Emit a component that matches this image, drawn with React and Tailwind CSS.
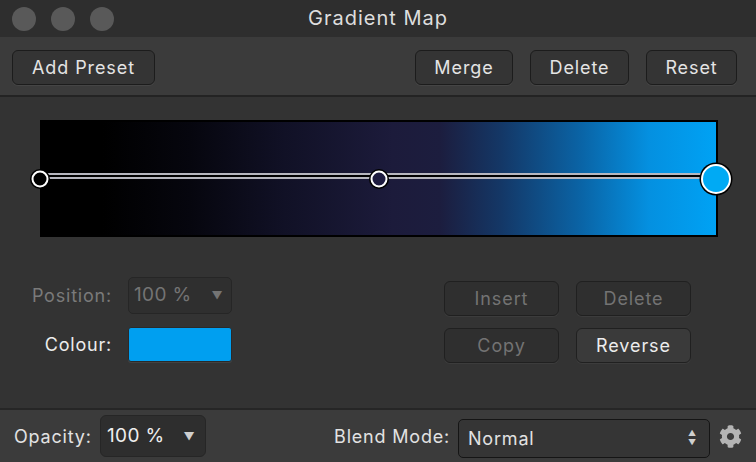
import { FaCog } from 'react-icons/fa';

const FONT = { fontFamily: 'Inter, "Liberation Sans", sans-serif' };

const ToolButton = ({ children, className = '' }) => (
  <button
    className={`h-[35px] rounded-[6px] border border-[#1c1c1c] bg-[#343434] text-[18px] tracking-[0.05em] text-[#e4e4e4] shadow-[0_1px_0_#454545] ${className}`}
  >
    {children}
  </button>
);

const PanelButton = ({ children, disabled }) => (
  <button
    className={`h-[35px] w-[115px] rounded-[6px] border border-[#202020] shadow-[0_1px_0_#3c3c3c] text-[18px] tracking-[0.05em] ${
      disabled ? 'bg-[#2f2f2f] text-[#737373]' : 'bg-[#3a3a3a] text-[#ececec]'
    }`}
  >
    {children}
  </button>
);

const Stop = ({ left, big, fill }) => (
  <div
    className={`absolute top-1/2 -translate-x-1/2 -translate-y-1/2 rounded-full border-[2px] border-white shadow-[0_0_0_1.5px_#000] ${
      big ? 'h-[30px] w-[30px]' : 'h-[17px] w-[17px]'
    }`}
    style={{ left, background: fill }}
  />
);

export default function App() {
  return (
    <div className="flex h-[462px] w-[756px] flex-col overflow-hidden bg-[#333333] tracking-[0.05em]" style={FONT}>
      {/* title bar */}
      <div className="relative flex h-[37px] items-center bg-[#2e2e2e] px-[12px]">
        <div className="flex gap-[15px]">
          <span className="h-[24px] w-[24px] rounded-full bg-[#595959]" />
          <span className="h-[24px] w-[24px] rounded-full bg-[#595959]" />
          <span className="h-[24px] w-[24px] rounded-full bg-[#595959]" />
        </div>
        <div className="absolute inset-x-0 top-[3px] text-center text-[20px] tracking-[0.05em] text-[#dedede]">Gradient Map</div>
      </div>

      {/* toolbar */}
      <div className="flex h-[60px] items-start gap-[17px] border-b-2 border-[#232323] bg-[#3b3b3b] pl-[12px] pr-[19px] pt-[13px]">
        <ToolButton className="w-[143px]">Add Preset</ToolButton>
        <div className="flex-1" />
        <ToolButton className="w-[98px]">Merge</ToolButton>
        <ToolButton className="w-[99px]">Delete</ToolButton>
        <ToolButton className="w-[91px]">Reset</ToolButton>
      </div>

      {/* editor */}
      <div className="flex-1 pl-[12px] pr-[65px] pt-[23px]">
        <div className="relative ml-[28px] h-[117px] w-[678px]">
          <div
            className="h-full w-full border-2 border-black"
            style={{
              background:
                'linear-gradient(90deg, #000 0%, #000 9%, #06060e 22%, #111126 36%, #1c1b3b 52%, #1c1d3e 59%, #143766 68%, #0a64a6 80%, #0490e0 90%, #00a2f4 100%)',
            }}
          />
          <div className="absolute left-0 right-0 top-[53px] h-[6px] border-y-2 border-[#b6b6be] bg-black" />
          <Stop left="0px" fill="#000" />
          <Stop left="339px" fill="#1e1c40" />
          <Stop left="676px" big fill="#00aaf4" />
        </div>

        <div className="mt-[39px] flex">
          <div className="grid grid-cols-[100px_104px] items-center gap-x-[16px] gap-y-[11px]">
            <span className="justify-self-end text-[18px] text-[#7a7a7a]">Position:</span>
            <div className="flex h-[37px] items-center justify-between rounded-[5px] border border-[#262626] bg-[#2f2f2f] pl-[5px] pr-[8px] text-[19px] tracking-[0.02em] text-[#747474]">
              <span>100 %</span>
              <span className="text-[11px]">▼</span>
            </div>
            <span className="justify-self-end text-[18px] text-[#ececec]">Colour:</span>
            <div className="h-[35px] rounded-[3px] border border-[#2a2a2a] bg-[#009ff0] shadow-[0_1px_0_#424242]" />
          </div>

          <div className="ml-auto mt-[5px] grid grid-cols-[115px_115px] gap-x-[17px] gap-y-[12px]">
            <PanelButton disabled>Insert</PanelButton>
            <PanelButton disabled>Delete</PanelButton>
            <PanelButton disabled>Copy</PanelButton>
            <PanelButton>Reverse</PanelButton>
          </div>
        </div>
      </div>

      {/* bottom bar */}
      <div className="flex h-[54px] items-center border-t-2 border-[#262626] bg-[#3b3b3b] pl-[14px] pr-[14px] text-[18px] text-[#e2e2e2]">
        <span className="w-[79px]">Opacity:</span>
        <div className="ml-[7px] flex h-[42px] w-[106px] items-center justify-between rounded-[6px] border border-[#262626] bg-[#2e2e2e] pl-[6px] pr-[10px] text-[19px] tracking-[0.02em] text-[#eeeeee]">
          <span>100 %</span>
          <span className="text-[11px] text-[#cfcfcf]">▼</span>
        </div>
        <span className="ml-auto">Blend Mode:</span>
        <div className="ml-[8px] mt-[4px] flex h-[39px] w-[252px] items-center justify-between rounded-[5px] border border-[#151515] bg-[#353535] pl-[9px] pr-[12px] text-[18px]">
          <span>Normal</span>
          <span className="flex flex-col items-center text-[8px] leading-[9px] text-[#cfcfcf]">
            <span>▲</span>
            <span>▼</span>
          </span>
        </div>
        <FaCog className="ml-[9px] text-[23px] text-[#b4b4b4]" />
      </div>
    </div>
  );
}
